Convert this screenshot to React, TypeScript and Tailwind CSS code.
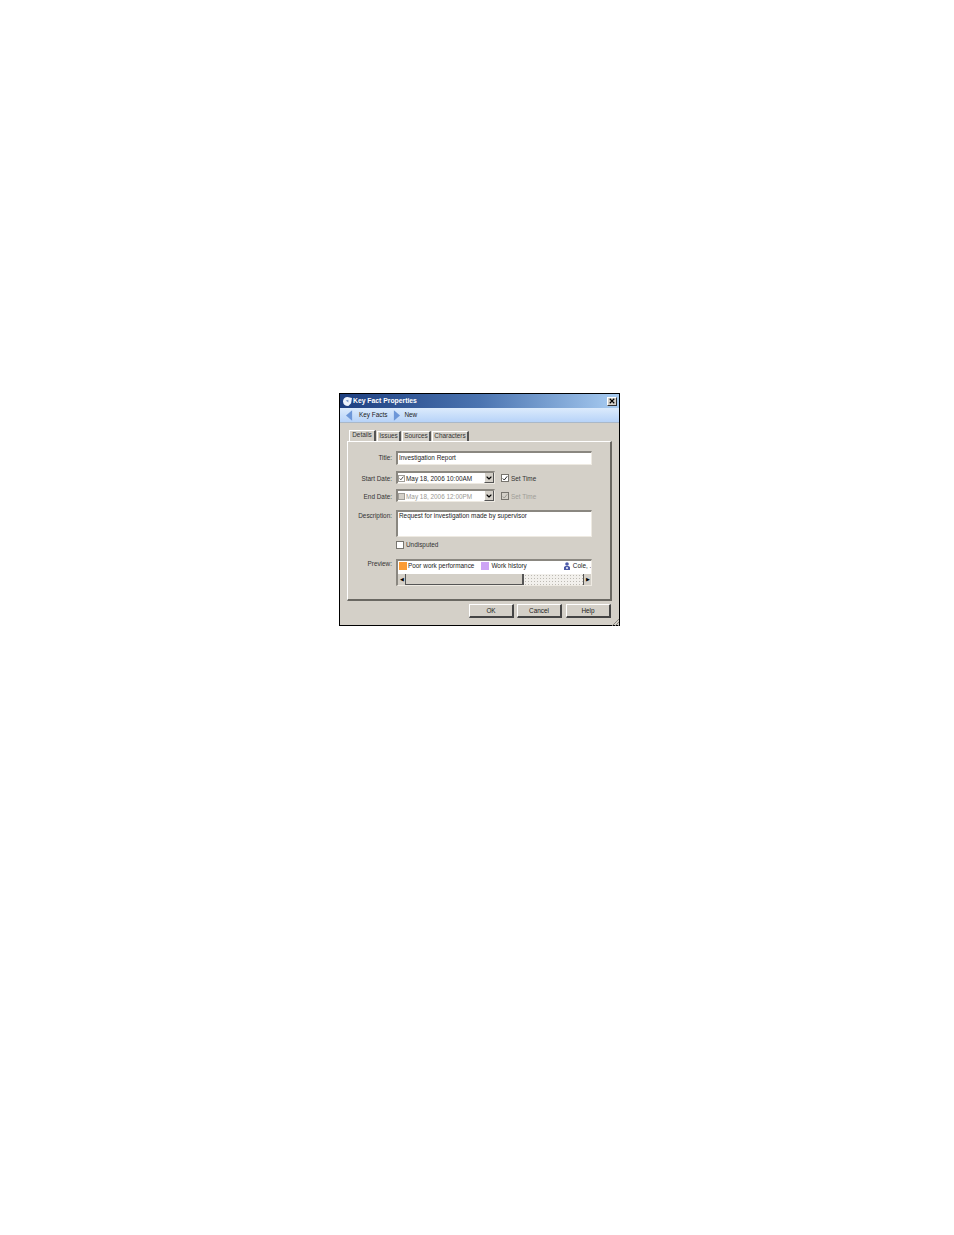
import { ChevronDown } from "lucide-react";

const font = { fontFamily: '"Liberation Sans", Arial, sans-serif' };

function Sunken({ className, children }: { className: string; children?: React.ReactNode }) {
  return (
    <div className={`border-t-2 border-l-2 border-t-[#8a8780] border-l-[#8a8780] border-b border-r border-b-[#eeeae2] border-r-[#eeeae2] bg-white ${className}`}>
      {children}
    </div>
  );
}

function Check({ checked, disabled, small }: { checked?: boolean; disabled?: boolean; small?: boolean }) {
  return (
    <span className={`flex shrink-0 items-center justify-center border ${small ? "h-[7px] w-[7px] border-[#a09e98]" : "h-[8px] w-[8px] border-[#77746e]"} ${disabled ? "bg-[#d4d0c8]" : "bg-white"}`}>
      {checked ? (
        <svg viewBox="0 0 8 8" className="h-[7px] w-[7px]">
          <path d="M1 4l2 2 4-5" fill="none" stroke={disabled ? "#9a9892" : "#222"} strokeWidth="1.3" />
        </svg>
      ) : null}
    </span>
  );
}

function Combo({ text, disabled, checked }: { text: string; disabled?: boolean; checked?: boolean }) {
  return (
    <Sunken className={`flex h-[13px] w-[99px] items-center ${disabled ? "bg-[#d4d0c8]" : ""}`}>
      <Check checked={checked} disabled={disabled} small />
      <span className={`ml-[1px] flex-1 whitespace-nowrap pt-[1px] text-[6.4px] ${disabled ? "text-[#9a9892]" : "text-[#222]"}`}>{text}</span>
      <span className="flex h-full w-[10px] items-center justify-center border-l border-l-white border-r border-r-[#555] border-b border-b-[#555] bg-[#d4d0c8]">
        <ChevronDown className="h-[8px] w-[8px] text-black" strokeWidth={3.5} />
      </span>
    </Sunken>
  );
}

function Raised({ label, className }: { label: string; className?: string }) {
  return (
    <div className={`flex h-[14px] w-[45px] items-center justify-center border-t border-l border-t-white border-l-white border-b-2 border-r-2 border-b-[#444] border-r-[#444] bg-[#d4d0c8] text-[6.4px] text-[#222] ${className ?? ""}`}>
      {label}
    </div>
  );
}

function Row({ label, className, labelClass, children }: { label: string; className?: string; labelClass?: string; children: React.ReactNode }) {
  return (
    <div className={`flex items-start ${className ?? ""}`}>
      <span className={`w-[43px] whitespace-nowrap pr-[4px] text-right text-[6.4px] leading-[8px] text-[#333] ${labelClass ?? "pt-[3px]"}`}>{label}</span>
      {children}
    </div>
  );
}

function Tab({ label, active, className }: { label: string; active?: boolean; className: string }) {
  return (
    <span
      className={`flex items-center justify-center whitespace-nowrap border-t border-l border-t-white border-l-white border-r-2 border-r-[#555] text-[6.4px] text-[#333] ${
        active ? "h-[11px] pb-[2px]" : "mt-[1px] h-[10px] pb-[1px]"
      } ${className}`}
    >
      {label}
    </span>
  );
}

export default function App() {
  return (
    <div className="flex min-h-[1235px] justify-center bg-white pt-[393px] pl-[5px]" style={font}>
      <div className="flex h-[233px] w-[281px] flex-col self-start border border-black bg-[#d4d0c8]">
        {/* title bar */}
        <div className="flex h-[14px] items-center bg-gradient-to-r from-[#1e3f80] via-[#4b74b0] to-[#a9cdf2] pl-[3px] pr-[2px]">
          <svg viewBox="0 0 10 10" className="h-[9px] w-[9px]">
            <path d="M0 5c0-3 2-5 5-5l5 1-1 6-3 3C2 10 0 8 0 5z" fill="#eef3fb" />
            <path d="M3 4l3-1v3z" fill="#7f9ccc" />
          </svg>
          <span className="ml-[1px] flex-1 text-[6.8px] font-bold text-white">Key Fact Properties</span>
          <span className="flex h-[9px] w-[10px] items-center justify-center border-t border-l border-t-white border-l-white border-b border-r border-b-[#333] border-r-[#333] bg-[#d4d0c8]">
            <svg viewBox="0 0 8 8" className="h-[6px] w-[6px]">
              <path d="M1 1l6 6M7 1L1 7" stroke="#000" strokeWidth="1.5" />
            </svg>
          </span>
        </div>

        {/* breadcrumb */}
        <div className="flex h-[15px] items-center border-b border-b-[#aab8c8] bg-gradient-to-b from-[#dcebfc] to-[#b7d3f8] pl-[6px]">
          <svg viewBox="0 0 8 12" className="h-[11px] w-[7px]">
            <path d="M7 0v12L0 6z" fill="#6d97d8" />
          </svg>
          <span className="ml-[6px] text-[6.4px] text-[#222]">Key Facts</span>
          <svg viewBox="0 0 8 12" className="ml-[6px] h-[11px] w-[7px]">
            <path d="M1 0v12l7-6z" fill="#6d97d8" />
          </svg>
          <span className="ml-[4px] text-[6.4px] text-[#222]">New</span>
        </div>

        {/* tabs */}
        <div className="mt-[7px] flex h-[11px] gap-[1px] pl-[9px]">
          <Tab label="Details" active className="w-[27px]" />
          <Tab label="Issues" className="w-[24px]" />
          <Tab label="Sources" className="w-[29px]" />
          <Tab label="Characters" className="w-[37px]" />
        </div>

        {/* details panel */}
        <div className="mx-[7px] h-[160px] w-[265px] border-t border-l border-t-white border-l-white border-b-2 border-r-2 border-b-[#6a6862] border-r-[#6a6862] pt-[9px] pl-[5px]">
          <Row label="Title:">
            <Sunken className="flex h-[14px] w-[196px] items-center pb-[2px] pl-[1px] text-[6.4px] text-[#222]">Investigation Report</Sunken>
          </Row>
          <Row label="Start Date:" className="mt-[6px]" labelClass="pt-[4px]">
            <Combo text="May 18, 2006 10:00AM" checked />
            <span className="ml-[6px] mt-[3px]"><Check checked /></span>
            <span className="ml-[2px] mt-[3px] text-[6.4px] leading-[9px] text-[#333]">Set Time</span>
          </Row>
          <Row label="End Date:" className="mt-[5px]" labelClass="pt-[4px]">
            <Combo text="May 18, 2006 12:00PM" disabled />
            <span className="ml-[6px] mt-[3px]"><Check checked disabled /></span>
            <span className="ml-[2px] mt-[3px] text-[6.4px] leading-[9px] text-[#a09e98]">Set Time</span>
          </Row>
          <Row label="Description:" className="mt-[8px]" labelClass="pt-[2px]">
            <Sunken className="h-[27px] w-[196px] pl-[1px] text-[6.4px] leading-[7px] text-[#222]">Request for investigation made by supervisor</Sunken>
          </Row>
          <div className="mt-[3px] flex items-center pl-[43px]">
            <Check />
            <span className="ml-[2px] text-[6.4px] text-[#333]">Undisputed</span>
          </div>
          <Row label="Preview:" className="mt-[9px]" labelClass="pt-[1px]">
            <Sunken className="flex h-[27px] w-[196px] flex-col">
              <div className="flex h-[14px] items-center overflow-hidden whitespace-nowrap pb-[3px] pl-[1px] text-[6.4px] text-[#222]">
                <span className="h-[8px] w-[8px] shrink-0 bg-[#fb9b33]" />
                <span className="ml-[1px]">Poor work performance</span>
                <span className="ml-[7px] h-[8px] w-[8px] shrink-0 bg-[#cda4f5]" />
                <span className="ml-[2px]">Work history</span>
                <svg viewBox="0 0 6 8" className="ml-[37px] h-[8px] w-[6px] shrink-0">
                  <circle cx="3" cy="2" r="1.8" fill="#4c5aa8" />
                  <path d="M0 8V5l1.5-1h3L6 5v3z" fill="#4c5aa8" />
                  <path d="M2 5h2v2H2z" fill="#c8cde8" />
                </svg>
                <span className="ml-[3px]">Cole, .</span>
              </div>
              <div className="flex h-[11px] items-center bg-[radial-gradient(#bdbab3_0.5px,#f2f0ec_0.5px)] bg-[length:3px_3px]">
                <span className="flex h-full w-[8px] items-center justify-center border-r border-[#555] bg-[#d4d0c8] text-[5px]">◀</span>
                <span className="h-full w-[118px] border-r-2 border-b border-r-[#555] border-b-[#555] bg-[#d4d0c8]" />
                <span className="flex-1" />
                <span className="flex h-full w-[8px] items-center justify-center border-l border-[#555] bg-[#d4d0c8] text-[5px]">▶</span>
              </div>
            </Sunken>
          </Row>
        </div>

        {/* footer buttons */}
        <div className="relative mt-[3px] flex justify-end gap-[3px] pr-[8px]">
          <Raised label="OK" />
          <Raised label="Cancel" />
          <Raised label="Help" className="ml-[1px]" />
          <svg viewBox="0 0 8 8" className="absolute right-0 bottom-[-8px] h-[8px] w-[8px]">
            <path d="M8 1L1 8M8 4L4 8M8 7L7 8" stroke="#8a8780" strokeWidth="1" />
          </svg>
        </div>
      </div>
    </div>
  );
}
